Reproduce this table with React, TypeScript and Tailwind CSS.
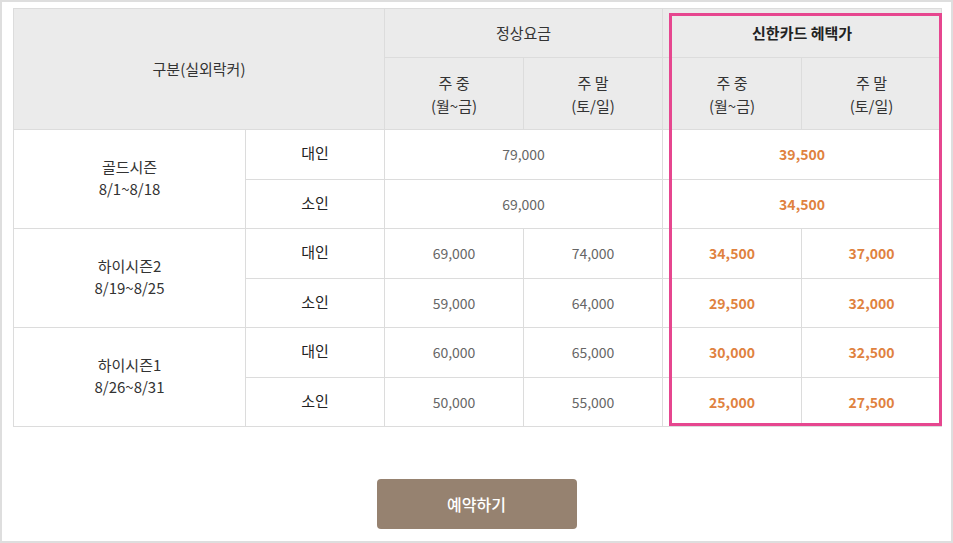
import { Fragment } from "react";

const rows = [
  {
    season: "골드시즌",
    period: "8/1~8/18",
    items: [
      { who: "대인", normal: ["79,000"], card: ["39,500"] },
      { who: "소인", normal: ["69,000"], card: ["34,500"] },
    ],
  },
  {
    season: "하이시즌2",
    period: "8/19~8/25",
    items: [
      { who: "대인", normal: ["69,000", "74,000"], card: ["34,500", "37,000"] },
      { who: "소인", normal: ["59,000", "64,000"], card: ["29,500", "32,000"] },
    ],
  },
  {
    season: "하이시즌1",
    period: "8/26~8/31",
    items: [
      { who: "대인", normal: ["60,000", "65,000"], card: ["30,000", "32,500"] },
      { who: "소인", normal: ["50,000", "55,000"], card: ["25,000", "27,500"] },
    ],
  },
];

const cell = "border border-[#dcdcdc] text-center align-middle";

export default function App() {
  return (
    <div
      className="w-[953px] h-[543px] bg-white border-2 border-[#dedede] relative overflow-hidden"
      style={{ fontFamily: '"Noto Sans CJK KR", "Noto Sans", sans-serif' }}
    >
      <div className="pt-[6px] pl-[11px]">
        <div className="relative w-[928px]">
          <table className="table-fixed border-collapse w-[928px] text-[15px] text-[#333]">
            <colgroup>
              <col className="w-[232px]" />
              <col className="w-[139px]" />
              <col className="w-[139px]" />
              <col className="w-[139px]" />
              <col className="w-[139px]" />
              <col className="w-[140px]" />
            </colgroup>
            <thead>
              <tr className="h-[49px] bg-[#ebebeb]">
                <th rowSpan={2} colSpan={2} className={`${cell} font-normal`}>
                  구분(실외락커)
                </th>
                <th colSpan={2} className={`${cell} font-normal`}>
                  정상요금
                </th>
                <th colSpan={2} className={`${cell} font-bold text-[#222]`}>
                  신한카드 헤택가
                </th>
              </tr>
              <tr className="h-[72px] bg-[#ebebeb]">
                {[0, 1].map((g) => (
                  <Fragment key={g}>
                    <th className={`${cell} font-normal leading-[23px]`}>
                      주 중
                      <br />
                      (월~금)
                    </th>
                    <th className={`${cell} font-normal leading-[23px]`}>
                      주 말
                      <br />
                      (토/일)
                    </th>
                  </Fragment>
                ))}
              </tr>
            </thead>
            <tbody>
              {rows.map((r) =>
                r.items.map((it, i) => (
                  <tr key={r.season + it.who} className={i === 0 ? "h-[50px]" : "h-[49px]"}>
                    {i === 0 && (
                      <td rowSpan={2} className={`${cell} leading-[22px] pb-[2px]`}>
                        {r.season}
                        <br />
                        {r.period}
                      </td>
                    )}
                    <td className={`${cell} text-[#222] pb-[2px]`}>{it.who}</td>
                    {it.normal.length === 1 ? (
                      <td colSpan={2} className={`${cell} text-[14px] text-[#666]`}>
                        {it.normal[0]}
                      </td>
                    ) : (
                      it.normal.map((n, k) => (
                        <td key={k} className={`${cell} text-[14px] text-[#666]`}>
                          {n}
                        </td>
                      ))
                    )}
                    {it.card.length === 1 ? (
                      <td colSpan={2} className={`${cell} text-[14px] font-bold text-[#e0823f]`}>
                        {it.card[0]}
                      </td>
                    ) : (
                      it.card.map((n, k) => (
                        <td key={k} className={`${cell} text-[14px] font-bold text-[#e0823f]`}>
                          {n}
                        </td>
                      ))
                    )}
                  </tr>
                ))
              )}
            </tbody>
          </table>
          {/* highlight frame over the card-price columns */}
          <div className="absolute left-[656px] top-[5px] w-[273px] h-[413px] border-[3px] border-[#e6468f] pointer-events-none" />
        </div>
      </div>
      <div className="flex justify-center mt-[52px]">
        <button className="w-[200px] h-[50px] rounded-[4px] bg-[#968270] text-white text-[16px] font-medium">
          예약하기
        </button>
      </div>
    </div>
  );
}
